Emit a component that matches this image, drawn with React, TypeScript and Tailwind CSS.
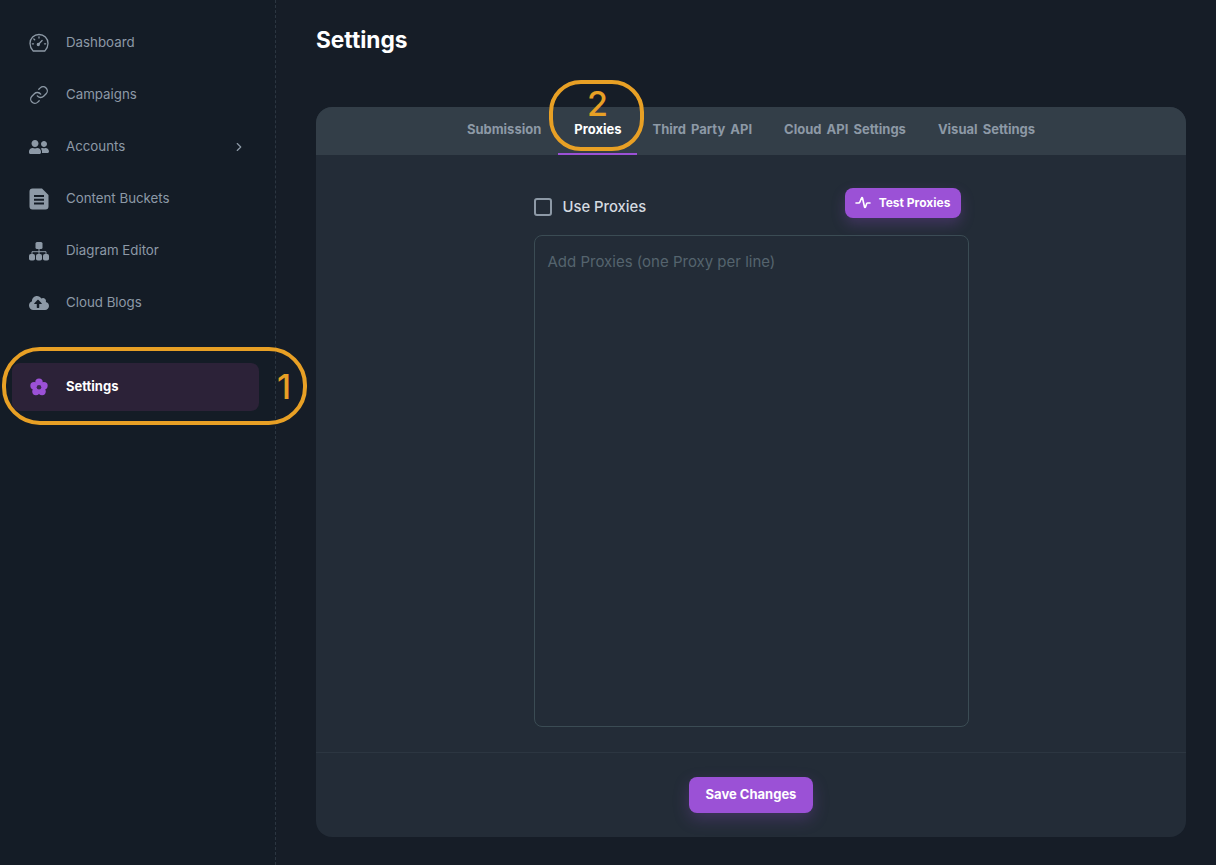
import { ChevronRight, Link } from "lucide-react";
import { FaCloudUploadAlt, FaUserFriends } from "react-icons/fa";
import type { ReactNode } from "react";

const GaugeIcon = () => (
  <svg width="20" height="20" viewBox="0 0 20 20" fill="none" stroke="currentColor" strokeWidth="1.3" strokeLinecap="round">
    <path d="M4.200 18h11.600c1.200-1.400 3.200-3.600 3.200-7.600C19 5.400 15 1.500 10 1.500S1 5.400 1 10.400c0 4 2 6.200 3.200 7.600z" />
    <path d="M9.300 11.500l3.800-4" />
    <circle cx="9.300" cy="11.500" r="1" />
    <path d="M10 3.800v1.200M4.800 6l.9.800M3.300 10.800h1.200M15.500 10.800h1.200" />
  </svg>
);

const DocIcon = () => (
  <svg width="20" height="22" viewBox="0 0 20 22">
    <path d="M3.500 0.500h9.500l6.500 6.500v11.500a3 3 0 0 1-3 3h-13a3 3 0 0 1-3-3v-15a3 3 0 0 1 3-3z" fill="currentColor" />
    <path d="M5 8h10M5 11.800h10M5 15.600h10" stroke="#141c26" strokeWidth="2" />
  </svg>
);

const TreeIcon = () => (
  <svg width="20" height="19" viewBox="0 0 20 19" fill="currentColor">
    <rect x="6.500" y="0" width="7" height="7" rx="1.500" />
    <rect x="0" y="12" width="6" height="6.500" rx="1.800" />
    <rect x="7" y="12" width="6" height="6.500" rx="1.800" />
    <rect x="14" y="12" width="6" height="6.500" rx="1.800" />
    <path d="M10 7v5M3 12v-2.300h14V12" fill="none" stroke="currentColor" strokeWidth="1" />
  </svg>
);

const FlowerIcon = () => (
  <svg width="18" height="18" viewBox="0 0 18 18">
    <g fill="#9b51d6">
      <circle cx="9" cy="4.100" r="3.700" />
      <circle cx="13.950" cy="7.700" r="3.700" />
      <circle cx="12.060" cy="13.500" r="3.700" />
      <circle cx="5.940" cy="13.500" r="3.700" />
      <circle cx="4.050" cy="7.700" r="3.700" />
      <circle cx="9" cy="9.300" r="4" />
    </g>
    <circle cx="9" cy="9.300" r="2.300" fill="#3a2a4e" />
  </svg>
);

const PulseIcon = () => (
  <svg width="16" height="13" viewBox="0 0 16 13" fill="none" stroke="currentColor" strokeWidth="1.600" strokeLinecap="round" strokeLinejoin="round">
    <path d="M1 7h2.500c.8 0 1.200-.4 1.500-1.300L6.500 2c.2-.6.8-.6 1 0l2 9c.2.6.8.6 1 0l1.200-3.500c.2-.4.5-.5 1-.5H15" />
  </svg>
);

const nav: { label: string; icon: ReactNode; arrow?: boolean }[] = [
  { label: "Dashboard", icon: <GaugeIcon /> },
  { label: "Campaigns", icon: <Link size={20} strokeWidth={1.6} /> },
  { label: "Accounts", icon: <FaUserFriends size={20} />, arrow: true },
  { label: "Content Buckets", icon: <DocIcon /> },
  { label: "Diagram Editor", icon: <TreeIcon /> },
  { label: "Cloud Blogs", icon: <FaCloudUploadAlt size={22} /> },
];

const tabs = ["Submission", "Proxies", "Third Party API", "Cloud API Settings", "Visual Settings"];

export default function App() {
  return (
    <div className="relative flex h-[865px] w-[1216px] overflow-hidden bg-[#161d27] font-['Inter',sans-serif]">
      <aside className="w-[276px] shrink-0 border-r border-dashed border-[#2c3641] bg-[#141c26] pt-[17px]">
        {nav.map((item) => (
          <div key={item.label} className="flex h-[52px] items-center pl-[29px] pr-[29px] text-[#8d99a6]">
            <div className="flex w-5 justify-center">{item.icon}</div>
            <span className="ml-[17px] flex-1 text-[13.3px]">{item.label}</span>
            {item.arrow && <ChevronRight size={14} />}
          </div>
        ))}
        <div className="ml-3 mt-[34px] flex h-12 w-[247px] items-center rounded-lg bg-[#2c2238] pl-[18px]">
          <FlowerIcon />
          <span className="ml-[18px] text-[13px] font-bold text-white">Settings</span>
        </div>
      </aside>

      <main className="flex-1 pl-10 pr-[30px]">
        <h1 className="pt-[26px] text-[22.7px] leading-7 font-bold text-white">Settings</h1>
        <section className="mt-[53px] flex h-[730px] flex-col overflow-hidden rounded-2xl bg-[#232c37]">
          <div className="flex h-12 shrink-0 items-stretch justify-center bg-[#333e48]">
            {tabs.map((tab) => (
              <div
                key={tab}
                className={
                  tab === "Proxies"
                    ? "-mr-px ml-px flex items-center border-b-2 border-[#9b51d6] px-4 text-[13px] font-bold text-white"
                    : "flex items-center border-b-2 border-transparent px-4 text-[13px] font-bold text-[#8d99a6] [word-spacing:2px]"
                }
              >
                {tab}
              </div>
            ))}
          </div>

          <div className="flex flex-1 justify-center pt-[33px]">
            <div className="w-[435px]">
              <div className="flex h-[47px] items-start justify-between pr-2">
                <label className="mt-[9px] flex items-center text-[14.8px] leading-5 font-medium text-[#d5dbe1]">
                  <span className="h-[18px] w-[18px] rounded-[3px] border-2 border-[#8d99a6]" />
                  <span className="ml-[11px]">Use Proxies</span>
                </label>
                <button className="flex h-[30px] w-[116px] items-center justify-center rounded-lg bg-[#9b51d6] pb-px text-xs font-bold text-white shadow-[0_6px_14px_rgba(155,81,214,0.25)]">
                  <PulseIcon />
                  <span className="ml-2">Test Proxies</span>
                </button>
              </div>
              <textarea
                placeholder="Add Proxies (one Proxy per line)"
                className="block h-[492px] w-full resize-none rounded-lg border border-[#3b4c54] bg-transparent px-[13px] py-[16px] text-[15px] leading-5 text-white outline-none placeholder:text-[#55646e]"
              />
            </div>
          </div>

          <div className="flex h-[85px] shrink-0 justify-center border-t border-[#2c3641] pt-6">
            <button className="h-9 w-[124px] rounded-lg bg-[#9b51d6] text-[13px] font-bold text-white shadow-[0_6px_16px_rgba(155,81,214,0.25)]">
              Save Changes
            </button>
          </div>
        </section>
      </main>

      {/* annotations drawn on top of the screenshot */}
      <div className="absolute left-[2px] top-[347px] h-[78px] w-[305px] rounded-[38px] border-4 border-[#e8a025]" />
      <span className="absolute left-[277px] top-[372px] text-[34px] leading-[30px] font-medium text-[#e8a025]">1</span>
      <div className="absolute left-[549px] top-[80px] h-[71px] w-[95px] rounded-[32px] border-4 border-[#e8a025]" />
      <span className="absolute left-[587px] top-[90px] text-[34px] leading-[28px] font-medium text-[#e8a025]">2</span>
    </div>
  );
}
